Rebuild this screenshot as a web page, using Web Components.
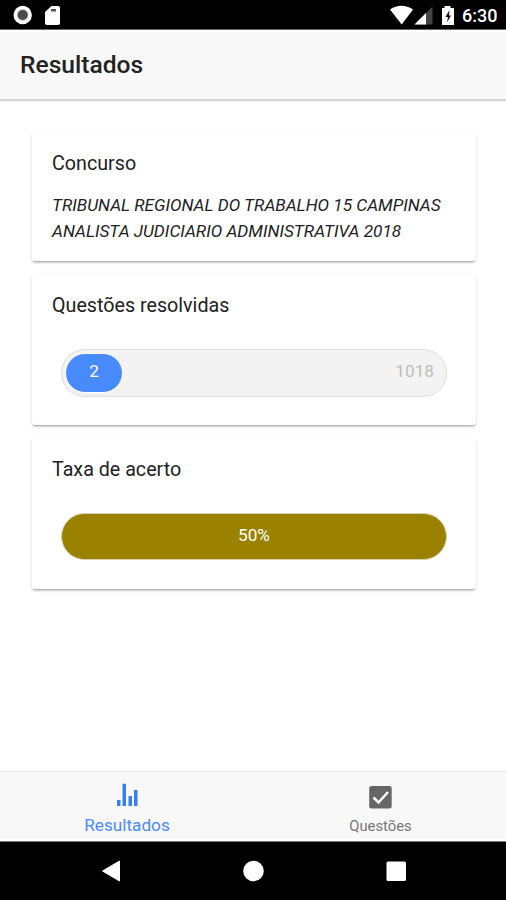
<!DOCTYPE html>
<html lang="pt-BR">
<head>
<meta charset="utf-8">
<title>Resultados</title>
<style>
html,body{margin:0;height:100%;overflow:hidden;background:#fff;font-family:Roboto,"Noto Sans",sans-serif;color:#222}
</style>
</head>
<body>
<results-app></results-app>
<script>
const define = (name, html) => customElements.define(name, class extends HTMLElement {
  constructor() {
    super();
    const t = document.createElement('template');
    t.innerHTML = html;
    this.attachShadow({mode: 'open'}).append(t.content.cloneNode(true));
  }
});

define('status-bar', `
<style>
:host{display:flex;flex:none;box-sizing:border-box;height:30px;background:#000;border-bottom:1px solid #666;color:#fff;align-items:center;padding:0 9px 0 12px}
svg{display:block}
.gap{flex:1}
.time{font-size:18px;line-height:29px;padding-top:2px;font-weight:500;width:35px;white-space:nowrap}
</style>
<svg width="60" height="29" viewBox="0 0 60 29">
<circle cx="10.7" cy="15" r="9.2" fill="#fff"/><circle cx="10.7" cy="15" r="5.7" fill="#bbb"/><circle cx="10.7" cy="15" r="5" fill="#4c4c4c"/>
<path d="M39.5 6H46q2 0 2 2v15q0 2-2 2H35q-2 0-2-2V12z" fill="#fff"/><path d="M39 9h5v2.5h-5z" fill="#555"/>
</svg>
<span class="gap"></span>
<svg width="74" height="29" viewBox="388 0 74 29">
<path d="M390 9.5Q401.5 2 413 9.5L401.7 24.5z" fill="#fff"/>
<path d="M414.5 24.5L432.5 6.500V24.500z" fill="#444"/><path d="M414.500 24.500L426 13V24.500z" fill="#fff"/>
<path d="M444.500 6h6v2h3.500v17h-12V8h2.500z" fill="#fff"/><path d="M449.500 10l-4 7h2.500l-1 5.500 4-7H449z" fill="#111"/>
</svg>
<span class="time">6:30</span>`);

define('title-bar', `
<style>
:host{display:block;flex:none;box-sizing:border-box;height:71px;background:#f8f8f8;padding:1px 20px 0;border-bottom:2px solid #d6d6d6;box-shadow:0 1px 2px #0001;border-top:2px solid #fff}
h1{margin:0;font-size:24.6px;line-height:64px;font-weight:500;color:#222;white-space:nowrap}
</style><h1><slot></slot></h1>`);

define('result-card', `
<style>
:host{display:block;box-sizing:border-box;background:#fff;border-radius:3px;padding:0 20px;color:#222;
box-shadow:0 3px 1px -2px rgba(0,0,0,.16),0 2px 2px 0 rgba(0,0,0,.14),0 1px 4px 0 rgba(0,0,0,.08)}
h2{margin:0;padding-top:18px;font-size:19.7px;line-height:28px;font-weight:400;white-space:nowrap}
</style><h2><slot name="title"></slot></h2><slot></slot>`);

define('contest-name', `
<style>
:host{display:block;font-size:17.24px;line-height:25.8px;font-style:italic;margin-top:15px;white-space:nowrap}
div{width:max-content}
</style><div><slot></slot></div>`);

define('progress-pill', `
<style>
:host{display:flex;box-sizing:border-box;height:48px;margin:29px 9px 0;border:1px solid #dedede;border-radius:24px;background:#f3f3f3;padding:3px 12px 3px 3px;justify-content:space-between;align-items:center;font-size:17.2px;color:#bdbdbd}
.value{box-sizing:border-box;width:58px;height:40px;border:1px solid #fff;border-radius:20px;background:#488aff;color:#fff;text-align:center;line-height:35px}
.total{line-height:36px;height:40px}
</style><span class="value"><slot name="value"></slot></span><span class="total"><slot name="total"></slot></span>`);

define('rate-pill', `
<style>
:host{display:block;box-sizing:border-box;height:47px;margin:29px 9px 0;border:1px solid #d9d3b5;border-radius:24px;background:#9a8200;color:#fff;text-align:center;font-size:17.2px;line-height:42px}
</style><slot></slot>`);

define('tab-item', `
<style>
:host{display:flex;flex:1;flex-direction:column;align-items:center;color:#777;font-size:14.8px}
:host([active]){color:#488aff;font-size:17.2px}
.label{line-height:20px;white-space:nowrap;padding-left:1px}
:host(:not([active])) .label{padding:1px 0 0 2px}
::slotted(svg){display:block;height:28px;width:28px;margin:11px 0 4px}
</style><slot name="icon"></slot><span class="label"><slot></slot></span>`);

define('tab-bar', `
<style>:host{display:flex;flex:none;box-sizing:border-box;height:70px;background:#f8f8f8;border-top:1px solid #e6e6e6;border-bottom:2px solid #fff}</style><slot></slot>`);

define('system-nav', `
<style>:host{display:block;flex:none;box-sizing:border-box;height:59px;background:#000;border-top:1px solid #777}svg{display:block}</style>
<svg width="506" height="58" viewBox="0 842 506 58" fill="#fff"><path d="M102.500 871L119.500 861V881z" stroke="#fff" stroke-linejoin="round"/><circle cx="253.500" cy="871" r="10.300"/><rect x="386.500" y="861.500" width="19.500" height="19.500" rx="1.500"/></svg>`);

define('results-app', `
<style>
:host{display:flex;flex-direction:column;width:506px;height:900px;background:#fff}
main{flex:1;display:flex;flex-direction:column;gap:13px;padding:31px 30px 0 32px;min-height:0}
.contest{height:129px}.done,.rate{height:151px}
</style>
<status-bar></status-bar>
<title-bar>Resultados</title-bar>
<main>
<result-card class="contest"><span slot="title">Concurso</span><contest-name>TRIBUNAL REGIONAL DO TRABALHO 15 CAMPINAS<br>ANALISTA JUDICIARIO ADMINISTRATIVA 2018</contest-name></result-card>
<result-card class="done"><span slot="title">Questões resolvidas</span><progress-pill><span slot="value">2</span><span slot="total">1018</span></progress-pill></result-card>
<result-card class="rate"><span slot="title">Taxa de acerto</span><rate-pill>50%</rate-pill></result-card>
</main>
<tab-bar>
<tab-item active><svg slot="icon" viewBox="0 0 28 28" fill="#387ef5"><path d="M4 17h3.500v6H4zM9.500 .8H13V23H9.500zM15.500 13H19v10h-3.500zM21 7h3.500v16H21z"/></svg>Resultados</tab-item>
<tab-item><svg slot="icon" viewBox="0 0 28 28"><rect x="3.200" y="3" width="22.500" height="22.500" rx="2.500" fill="#666"/><path d="M7.500 14.500l5 5L22 9" fill="none" stroke="#fff" stroke-width="2.500"/></svg>Questões</tab-item>
</tab-bar>
<system-nav></system-nav>`);
</script>
</body>
</html>
